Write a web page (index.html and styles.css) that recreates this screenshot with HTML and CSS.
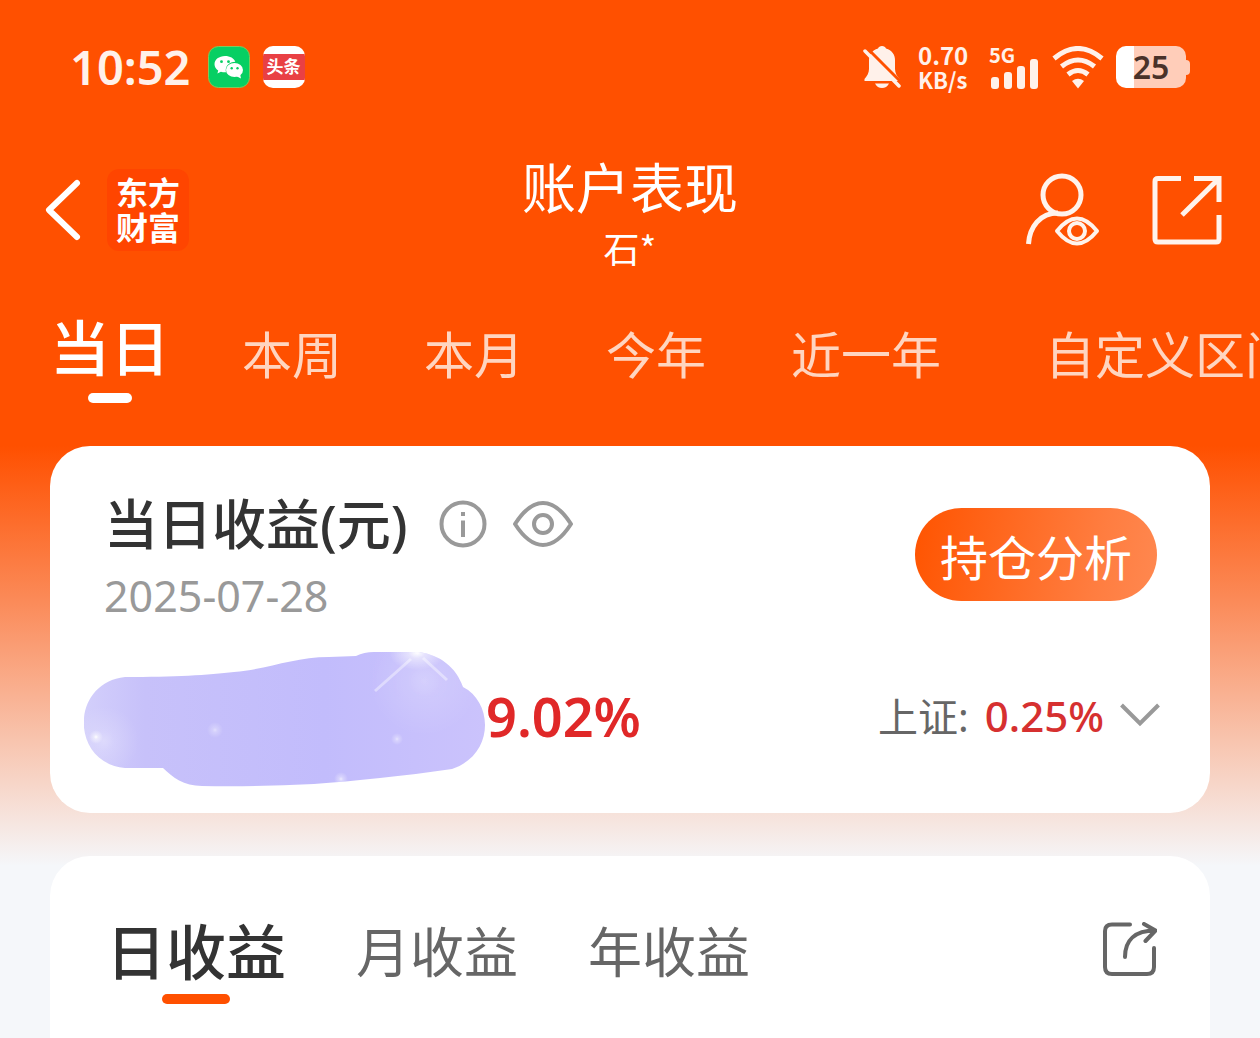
FILE: index.html
```html
<!DOCTYPE html>
<html lang="zh-CN">
<head>
    <meta charset="UTF-8">
    <meta name="viewport" content="width=device-width, initial-scale=1.0">
    <title>账户表现</title>
    <link rel="stylesheet" href="styles.css">
</head>
<body>

    <!-- Status bar -->
    <div class="status-bar">
        <div class="status-left">
            <span class="clock">10:52</span>
            <svg class="app-icon" viewBox="0 0 42 42" aria-hidden="true">
                <rect x="0.5" y="0.5" width="41" height="41" rx="10" fill="#07cf63" stroke="#7fc95a"/>
                <path d="M17 10c-6 0-10.500 3.600-10.500 8.200 0 2.600 1.400 4.800 3.700 6.300l-.8 3.100 3.500-1.900c1.300.4 2.700.6 4.100.6h1c-1.500-6 3.500-10.600 9.300-10.600C26.200 12.400 22 10 17 10z" fill="#fff"/>
                <ellipse cx="26.500" cy="24" rx="8.500" ry="7" fill="#fff"/>
                <path d="M28 30l5 2.500-.8-4z" fill="#fff"/>
                <g fill="#07cf63"><circle cx="13.500" cy="15.700" r="1.400"/><circle cx="20.500" cy="15.700" r="1.400"/><circle cx="23.700" cy="22.300" r="1.200"/><circle cx="29.500" cy="22.300" r="1.200"/></g>
            </svg>
            <span class="news-icon"><span>头条</span></span>
        </div>
        <div class="status-right">
            <svg class="bell" viewBox="0 0 38 44" aria-hidden="true">
                <path d="M19 1c-2 0-3.500 1-4 2.500C9 5 6 10 6 15v9c0 4-2 7-4.500 10v2h35v-2C34 31 32 28 32 24v-9C32 10 29 5 23 3.500 22.500 2 21 1 19 1z" fill="#fff1ea"/>
                <path d="M12 38.500h14c-1.500 3-4 4.500-7 4.500s-5.500-1.500-7-4.500z" fill="#fff1ea"/>
                <path d="M4.500 3.500L39 38" stroke="#ff5000" stroke-width="3"/>
                <path d="M2 6l34 35" stroke="#fff1ea" stroke-width="3.500" stroke-linecap="round"/>
            </svg>
            <div class="speed"><span>0.70</span><span class="unit">KB/s</span></div>
            <div class="signal">
                <span>5G</span>
                <svg viewBox="0 0 48 30" aria-hidden="true" fill="#fff1ea">
                    <rect x="0" y="18" width="8" height="12" rx="3"/>
                    <rect x="13" y="13" width="8" height="17" rx="3"/>
                    <rect x="26" y="7" width="8" height="23" rx="3"/>
                    <rect x="39" y="0" width="8" height="30" rx="3"/>
                </svg>
            </div>
            <svg class="wifi" viewBox="0 0 52 43" aria-hidden="true" fill="none" stroke="#fff1ea" stroke-width="5">
                <path d="M2 12.500Q26-7.500 50 12.500M9.500 20.500Q26 7.500 42.500 20.500M16 28.500Q26 20.500 36 28.500"/>
                <path d="M20 35q6-4.500 12 0l-6 7.500z" fill="#fff1ea" stroke="none"/>
            </svg>
            <div class="battery"><span>25</span></div>
        </div>
    </div>

    <!-- Page header -->
    <header class="header">
        <div class="header-left">
            <button class="icon-btn" aria-label="返回">
                <svg width="38" height="64" viewBox="0 0 38 64" fill="none" stroke="#fff" stroke-width="6" stroke-linecap="round" stroke-linejoin="round"><path d="M33 5L5 32l28 27"/></svg>
            </button>
            <div class="logo"><span>东方</span><span>财富</span></div>
        </div>
        <div class="header-title">
            <h1>账户表现</h1>
            <p>石*</p>
        </div>
        <div class="header-right">
            <button class="icon-btn" aria-label="查看账户">
                <svg width="74" height="74" viewBox="0 0 74 74" fill="none" stroke="#fff3ec" stroke-width="5">
                    <circle cx="36" cy="22" r="19"/>
                    <path d="M2.500 71C3.500 54 14 40 32 40"/>
                    <path d="M31 58Q41 45.500 51 45.500T71 58Q61 70.500 51 70.500T31 58z" stroke-width="4" stroke-linejoin="round"/>
                    <circle cx="51" cy="58" r="8" stroke-width="4"/>
                </svg>
            </button>
            <button class="icon-btn" aria-label="分享">
                <svg width="70" height="70" viewBox="0 0 70 70" fill="none" stroke="#fff3ec" stroke-width="5">
                    <path d="M29 3.500H6q-3 0-3 3V64q0 3 3 3h58q3 0 3-3V40"/>
                    <path d="M42 3.500h25V27M67 3.500L30 40"/>
                </svg>
            </button>
        </div>
    </header>

    <!-- Period tabs -->
    <nav class="periods">
        <button class="period active">当日</button>
        <button class="period">本周</button>
        <button class="period">本月</button>
        <button class="period">今年</button>
        <button class="period year">近一年</button>
        <button class="period custom">自定义区间</button>
    </nav>

    <main>
        <!-- Today's profit -->
        <section class="card profit">
            <div class="profit-head">
                <div>
                    <div class="profit-title">
                        <h2>当日收益(元)</h2>
                        <button class="icon-btn" aria-label="说明">
                            <svg width="48" height="48" viewBox="0 0 48 48" fill="none" stroke="#999" stroke-width="4"><circle cx="24" cy="24" r="21.500"/><path d="M24 20.500V37M24 12v4"/></svg>
                        </button>
                        <button class="icon-btn" aria-label="隐藏金额">
                            <svg width="60" height="48" viewBox="0 0 60 48" fill="none" stroke="#999" stroke-width="4" stroke-linejoin="round"><path d="M2 24C11 10 20 3 30 3s19 7 28 21C49 38 40 45 30 45S11 38 2 24z"/><circle cx="30" cy="24" r="9"/></svg>
                        </button>
                    </div>
                    <p class="date">2025-07-28</p>
                </div>
                <button class="analysis">持仓分析</button>
            </div>
            <div class="profit-row">
                <svg class="mask" viewBox="0 0 402 136" aria-hidden="true">
                    <defs>
                        <linearGradient id="lilac" x1="0" x2="1" y1="0" y2="0">
                            <stop offset="0" stop-color="#d3cffb"/>
                            <stop offset="0.150" stop-color="#c7c1fa"/>
                            <stop offset="0.600" stop-color="#c2bcfc"/>
                            <stop offset="1" stop-color="#cbc3fc"/>
                        </linearGradient>
                        <radialGradient id="glow">
                            <stop offset="0" stop-color="#fff"/>
                            <stop offset="0.300" stop-color="#fff" stop-opacity="0.500"/>
                            <stop offset="1" stop-color="#fff" stop-opacity="0"/>
                        </radialGradient>
                        <clipPath id="blob"><path d="M41 26C90 26 125 24 150 21C185 18 210 6 245 6L272 5Q280 1 290 1L335 1C356 4 372 16 379 36C410 52 410 104 368 118C320 125 270 130 230 133Q170 136 118 135C100 135 88 126 79 117L41 117C-14 112-14 32 41 26z"/></clipPath>
                    </defs>
                    <g clip-path="url(#blob)">
                        <rect width="402" height="136" fill="url(#lilac)"/>
                        <ellipse cx="333" cy="2" rx="28" ry="17" fill="url(#glow)"/>
                        <circle cx="340" cy="30" r="55" fill="url(#glow)" opacity="0.250"/>
                        <path d="M327 8L291 40M339 7l24 22" stroke="#fff" stroke-width="3" opacity="0.400"/>
                        <circle cx="12" cy="86" r="7" fill="url(#glow)"/>
                        <circle cx="20" cy="90" r="35" fill="url(#glow)" opacity="0.300"/>
                        <circle cx="131" cy="79" r="8" fill="url(#glow)" opacity="0.500"/>
                        <circle cx="313" cy="88" r="6" fill="url(#glow)" opacity="0.600"/>
                        <circle cx="257" cy="128" r="7" fill="url(#glow)" opacity="0.700"/>
                    </g>
                </svg>
                <strong class="rate">9.02%</strong>
                <button class="index">
                    <span class="index-name">上证:</span>
                    <span class="index-rate">0.25%</span>
                    <svg width="40" height="24" viewBox="0 0 40 24" fill="none" stroke="#999" stroke-width="4" aria-hidden="true"><path d="M1.500 2L20 20.500 38.500 2"/></svg>
                </button>
            </div>
        </section>

        <!-- Profit history -->
        <section class="card history">
            <div class="history-tabs">
                <button class="history-tab active">日收益</button>
                <button class="history-tab">月收益</button>
                <button class="history-tab">年收益</button>
            </div>
            <button class="icon-btn" aria-label="分享收益">
                <svg width="54" height="54" viewBox="0 0 54 54" fill="none" stroke="#666" stroke-width="4" stroke-linecap="round" stroke-linejoin="round">
                    <path d="M27 2.500H9Q2 2.500 2 9v36q0 7 7 7h35q7 0 7-7V26"/>
                    <path d="M22 35C22 18 32 8.500 52 8.500M41 2l11.500 6.500L42.500 19"/>
                </svg>
            </button>
        </section>
    </main>

</body>
</html>
```

FILE: styles.css
```css
/* Reset styles */
* {
    margin: 0;
    padding: 0;
    box-sizing: border-box;
}

body {
    display: flex;
    flex-direction: column;
    font-family: 'Noto Sans', 'Noto Sans CJK SC', sans-serif;
    background: #f5f7fa linear-gradient(#ff5000 0, #ff5000 446px, #fb8a58 600px, #f8c4ae 740px, #f5f7fa 866px) no-repeat;
    color: #333;
    min-height: 100vh;
    overflow-x: hidden;
}

button {
    font-family: inherit;
    background: none;
    border: none;
    color: inherit;
    cursor: pointer;
    white-space: nowrap;
}

svg {
    display: block;
    flex-shrink: 0;
}

.icon-btn {
    display: block;
}

/* Status bar */
.status-bar {
    display: flex;
    justify-content: space-between;
    align-items: center;
    height: 134px;
    padding: 0 74px 0 70px;
    color: #fff1ea;
}

.status-left,
.status-right {
    display: flex;
    align-items: center;
}

.status-left {
    gap: 13px;
}

.clock {
    font-size: 47px;
    font-weight: 600;
    line-height: 60px;
    margin-right: 4px;
}

.app-icon {
    width: 42px;
    height: 42px;
}

.news-icon {
    display: flex;
    align-items: center;
    width: 42px;
    height: 42px;
    border-radius: 10px;
    background: #fff;
    overflow: hidden;
}

.news-icon span {
    width: 42px;
    background: #e94044;
    color: #fff;
    font-size: 17px;
    font-weight: bold;
    line-height: 26px;
    text-align: center;
}

.bell {
    width: 38px;
    height: 44px;
    margin-right: 17px;
}

.speed {
    display: flex;
    flex-direction: column;
    width: 52px;
    margin-right: 19px;
    font-family: 'Noto Sans CJK SC', sans-serif;
    font-size: 24px;
    font-weight: bold;
    line-height: 24px;
}

.speed .unit {
    font-size: 22px;
}

.signal {
    width: 50px;
    margin-right: 13px;
    font-family: 'Noto Sans CJK SC', sans-serif;
    font-size: 20px;
    font-weight: bold;
    line-height: 18px;
}

.signal span {
    display: block;
}

.signal svg {
    width: 48px;
    height: 30px;
    margin: -5px 0 0 2px;
}

.wifi {
    width: 52px;
    height: 43px;
    margin-right: 12px;
}

.battery {
    position: relative;
    width: 70px;
    height: 42px;
    border-radius: 10px;
    background: linear-gradient(90deg, #fff 25%, #ffcdb9 25%);
    color: #4a3229;
    font-size: 32px;
    font-weight: 600;
    line-height: 42px;
    text-align: center;
}

.battery::after {
    content: '';
    position: absolute;
    left: 70px;
    top: 14px;
    width: 4px;
    height: 15px;
    border-radius: 0 4px 4px 0;
    background: #ffcdb9;
}

/* Page header */
.header {
    display: grid;
    grid-template-columns: 1fr auto 1fr;
    align-items: center;
    height: 152px;
    padding: 0 38px;
    color: #fff;
}

.header-left,
.header-right {
    display: flex;
    align-items: center;
}

.header-left {
    gap: 25px;
    padding-left: 6px;
}

.header-right {
    gap: 52px;
    justify-content: flex-end;
}

.logo {
    display: flex;
    flex-direction: column;
    width: 82px;
    padding: 6px 0;
    border-radius: 12px;
    background: #ff4500;
    font-size: 32px;
    font-weight: bold;
    line-height: 35px;
    text-align: center;
}

.header-title {
    padding-top: 8px;
    text-align: center;
}

.header-title h1 {
    font-size: 54px;
    font-weight: normal;
    line-height: 66px;
}

.header-title p {
    font-family: 'Noto Sans CJK SC', sans-serif;
    font-size: 36px;
    line-height: 52px;
}

/* Period tabs */
.periods {
    display: flex;
    align-items: center;
    height: 134px;
    padding-left: 19px;
    overflow: hidden;
}

.period {
    position: relative;
    flex-shrink: 0;
    min-width: 182px;
    height: 100px;
    color: #ffd5c0;
    font-size: 50px;
    line-height: 96px;
    padding-top: 4px;
}

.period.year {
    padding-left: 44px;
    padding-right: 44px;
}

.period.custom {
    padding-left: 60px;
    padding-right: 60px;
}

.period.active {
    padding: 0 0 10px;
    color: #fff;
    font-size: 60px;
    font-weight: 500;
    line-height: 80px;
}

.active::after {
    content: '';
    position: absolute;
    left: 50%;
    bottom: 0;
    width: 44px;
    height: 10px;
    border-radius: 5px;
    background: #fff;
    transform: translateX(-50%);
}

/* Cards */
main {
    display: flex;
    flex: 1;
    flex-direction: column;
    gap: 43px;
    padding: 26px 50px 0;
}

.card {
    border-radius: 40px;
    background: #fff;
}

.profit {
    padding: 42px 50px 26px 34px;
}

.profit-head {
    display: flex;
    justify-content: space-between;
    align-items: flex-start;
    padding: 0 3px 0 20px;
    margin-bottom: 25px;
}

.profit-title {
    display: flex;
    align-items: center;
    gap: 26px;
    margin-bottom: 6px;
}

.profit-title h2 {
    margin-right: 5px;
    font-size: 54px;
    font-weight: 500;
    line-height: 72px;
}

.date {
    color: #999;
    font-size: 43px;
    line-height: 60px;
}

.analysis {
    margin-top: 20px;
    padding: 7px 25px 0;
    border-radius: 47px;
    background: linear-gradient(100deg, #ff5400, #ff7d40 75%, #ff8850);
    color: #fff;
    font-size: 48px;
    line-height: 86px;
}

.profit-row {
    display: flex;
    align-items: center;
}

.mask {
    width: 402px;
    height: 136px;
}

.rate {
    padding-bottom: 6px;
    color: #e02828;
    font-size: 54px;
    font-weight: 600;
}

.index {
    display: flex;
    align-items: center;
    gap: 16px;
    padding-bottom: 8px;
    margin-left: auto;
}

.index-name {
    color: #666;
    font-size: 40px;
}

.index-rate {
    color: #d63030;
    font-size: 42px;
    font-weight: 500;
}

/* Profit history */
.history {
    display: flex;
    flex: 1;
    justify-content: space-between;
    align-items: flex-start;
    padding: 54px 53px 0 56px;
    border-radius: 40px 40px 0 0;
}

.history .icon-btn {
    padding-top: 12px;
}

.history-tabs {
    display: flex;
    align-items: center;
    gap: 70px;
}

.history-tab {
    position: relative;
    height: 94px;
    padding-bottom: 10px;
    color: #666;
    font-size: 54px;
    line-height: 84px;
}

.history-tab.active {
    color: #333;
    font-size: 60px;
    font-weight: 500;
}

.history-tab.active::after {
    width: 68px;
    background: #ff5000;
}
```
